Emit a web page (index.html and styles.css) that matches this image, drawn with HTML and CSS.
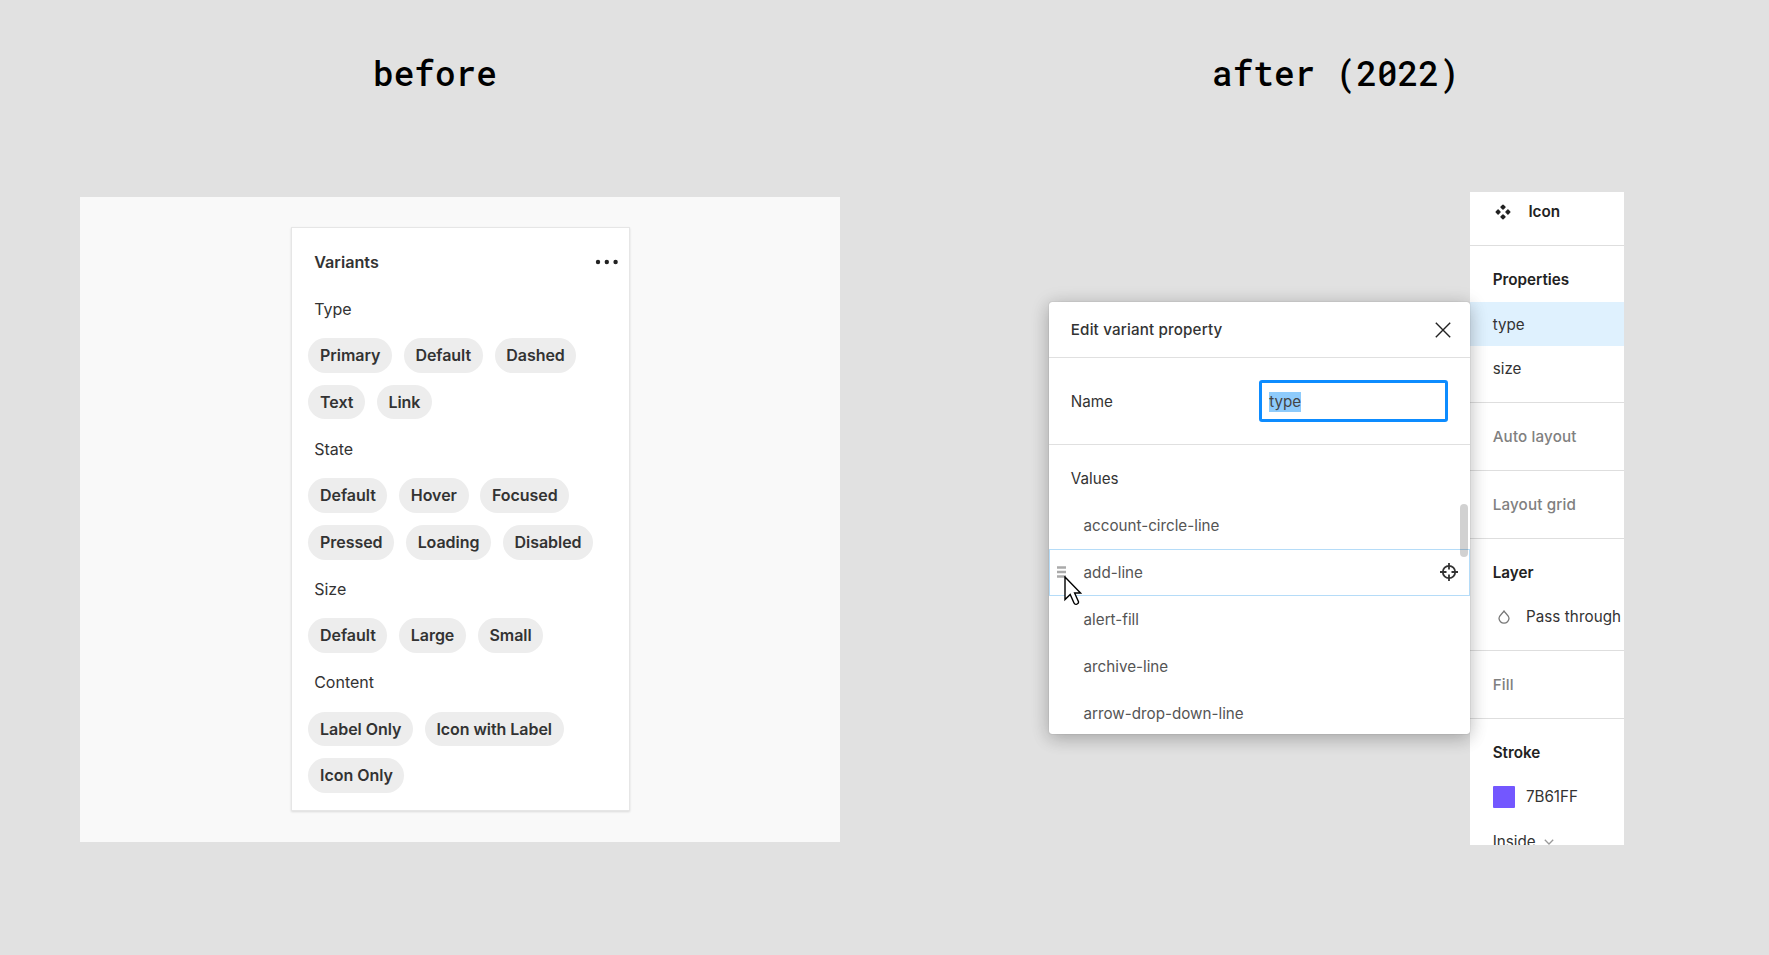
FILE: index.html
```html
<!DOCTYPE html>
<html lang="en">
<head>
<meta charset="utf-8">
<title>Variants: before and after</title>
<link rel="stylesheet" href="styles.css">
</head>
<body>
<main class="board">
  <section class="before">
    <h1 class="heading">before</h1>
    <div class="stage">
      <div class="card">
        <div class="card-head"><h2>Variants</h2>
          <svg class="dots" width="24" height="6" viewBox="0 0 24 6"><circle cx="3" cy="3" r="2.2"/><circle cx="11.8" cy="3" r="2.2"/><circle cx="20.6" cy="3" r="2.2"/></svg>
        </div>
        <p class="label">Type</p>
        <div class="chips"><span>Primary</span><span>Default</span><span>Dashed</span></div>
        <div class="chips"><span>Text</span><span>Link</span></div>
        <p class="label">State</p>
        <div class="chips"><span>Default</span><span>Hover</span><span>Focused</span></div>
        <div class="chips"><span>Pressed</span><span>Loading</span><span>Disabled</span></div>
        <p class="label">Size</p>
        <div class="chips"><span>Default</span><span>Large</span><span>Small</span></div>
        <p class="label">Content</p>
        <div class="chips"><span>Label Only</span><span>Icon with Label</span></div>
        <div class="chips"><span>Icon Only</span></div>
      </div>
    </div>
  </section>
  <section class="after">
    <h1 class="heading">after (2022)</h1>
    <div class="editor">
      <div class="modal">
        <header class="modal-head"><h2>Edit variant property</h2>
          <svg class="close" width="16" height="16" viewBox="0 0 16 16"><path d="M.8.8l14.4 14.4M15.2.8L.8 15.2"/></svg>
        </header>
        <div class="name-row"><span class="name">Name</span><div class="field"><mark>type</mark></div></div>
        <div class="values">
          <p class="values-title">Values</p>
          <ul class="list">
            <li><span>account-circle-line</span></li>
            <li class="active">
              <svg class="grip" width="9" height="12" viewBox="0 0 9 12"><path d="M0 1.500h9M0 6h9M0 10.500h9"/></svg>
              <span>add-line</span>
              <svg class="target" width="18" height="18" viewBox="0 0 18 18"><circle cx="9" cy="9" r="6.2"/><path d="M9 0v6.500M9 11.500v6.500M0 9h6.500M11.500 9h6.500"/></svg>
              <svg class="cursor" width="18" height="30" viewBox="0 0 18 30"><path d="M1 1v22.500l5.200-5 3.800 8.500q.8 1.800 2.800 1.200 2.200-.8 1.600-2.700L10.600 17H16.500z"/></svg>
            </li>
            <li><span>alert-fill</span></li>
            <li><span>archive-line</span></li>
            <li><span>arrow-drop-down-line</span></li>
          </ul>
          <div class="thumb"></div>
        </div>
      </div>
      <aside class="sidebar">
        <div class="component">
          <svg width="16" height="16" viewBox="0 0 16 16"><path d="M8 1.200L9.900 3.100 8 5 6.100 3.100zM8 11l1.900 1.900L8 14.800l-1.900-1.900zM3.100 6.100L5 8 3.100 9.900 1.200 8zM12.900 6.100L14.800 8l-1.900 1.900L11 8z"/></svg>
          <b>Icon</b>
        </div>
        <div class="group props"><h3>Properties</h3><p class="selected">type</p><p>size</p></div>
        <div class="group muted">Auto layout</div>
        <div class="group muted">Layout grid</div>
        <div class="group layer"><h3>Layer</h3>
          <p class="blend"><svg width="12" height="14" viewBox="0 0 12 14"><path d="M6 1C4.500 3.600 1 5.400 1 8.300a5 4.800 0 0 0 10 0C11 5.400 7.500 3.600 6 1z"/></svg><span>Pass through</span></p>
        </div>
        <div class="group muted">Fill</div>
        <div class="group stroke"><h3>Stroke</h3>
          <p class="color"><i></i><span>7B61FF</span></p>
          <p class="align">Inside <svg width="10" height="6" viewBox="0 0 10 6"><path d="M.8.8L5 5 9.200.8"/></svg></p>
        </div>
      </aside>
    </div>
  </section>
</main>
</body>
</html>
```
FILE: styles.css
```css
* { box-sizing: border-box; }
body { margin: 0; background: #e1e1e1; font-family: Inter, sans-serif; color: #333; }
h1, h2, h3, p, ul { margin: 0; padding: 0; list-style: none; }
svg { display: block; flex: none; }

.board { display: flex; height: 955px; overflow: hidden; }
.heading {
  font: 500 34.400px/44px "Roboto Mono", "DejaVu Sans Mono", monospace;
  color: #000;
  white-space: pre;
}

/* Variants card */
.before { width: 884px; padding: 51px 0 0 80px; }
.before .heading { margin-left: 293px; }
.stage { width: 760px; height: 644.500px; margin-top: 102.300px; padding: 30px 0 0 210.700px; background: #f9f9f9; }
.card {
  width: 339.500px;
  height: 584px;
  padding: 10.400px 12px 0 16.800px;
  background: #fff;
  border: 1px solid #e6e6e6;
  box-shadow: 0 1px 2px rgba(0, 0, 0, .12);
  font-size: 16px;
}
.card-head, .label, .chips { display: flex; align-items: center; height: 46.700px; }
.card-head { justify-content: space-between; padding-left: 5.700px; }
.card h2 { font-size: 16.200px; font-weight: 600; }
.dots { fill: #222; margin-right: -1.500px; }
.label { padding-left: 5.700px; }
.chips { gap: 11.800px; }
.chips span {
  height: 34.700px;
  padding: 0 11.600px;
  border-radius: 18px;
  background: #ededed;
  font-weight: 560;
  letter-spacing: -.05px;
  line-height: 35px;
}
.chips span + span { padding: 0 11.700px; }

/* Property editor */
.after { width: 885px; padding-top: 51px; }
.after .heading { margin-left: 328px; }
.editor { display: flex; margin: 97px 0 0 164.800px; font-size: 15.200px; }
.modal {
  position: relative;
  z-index: 1;
  width: 421.600px;
  height: 432.700px;
  margin-top: 109.700px;
  background: #fff;
  border-radius: 3px;
  box-shadow: 0 2px 20px rgba(0, 0, 0, .14), 0 5px 17px rgba(0, 0, 0, .16), 0 0 1px rgba(0, 0, 0, .4);
}
.modal-head { display: flex; align-items: center; justify-content: space-between; height: 56.700px; padding: 0 19.500px 0 22px; border-bottom: 1px solid #e0e0e0; }
.modal-head h2 { font-size: 15.200px; font-weight: 500; letter-spacing: .15px; }
.close { stroke: #222; stroke-width: 1.400; fill: none; }
.name-row { display: flex; align-items: center; justify-content: space-between; height: 87.100px; padding: 0 22px; border-bottom: 1px solid #e0e0e0; }
.field { width: 189px; height: 42px; padding: 8.500px 6.800px; border: 3px solid #0d8cff; border-radius: 3px; }
.field mark { display: block; width: max-content; height: 20px; line-height: 20px; background: #8ecbfb; color: #444; }
.values { position: relative; }
.values-title { height: 56.300px; padding: 0 22px; line-height: 68px; }
.list li { display: flex; align-items: center; position: relative; height: 47.100px; padding-left: 34.800px; color: #555; }
.list .active { outline: 1.300px solid #b5dcf8; outline-offset: -1.300px; }
.grip { position: absolute; left: 8px; top: 17px; stroke: #aaa; stroke-width: 2.500; }
.target { position: absolute; right: 12px; top: 14px; fill: none; stroke: #333; stroke-width: 1.800; }
.cursor { position: absolute; left: 15px; top: 27px; fill: #fff; stroke: #000; stroke-width: 1.400; }
.thumb { position: absolute; right: 2.500px; top: 58.500px; width: 8px; height: 53px; border-radius: 4px; background: rgba(0, 0, 0, .18); }

/* Inspector */
.sidebar { width: 154px; height: 653.300px; background: #fff; overflow: hidden; white-space: nowrap; }
.sidebar h3, .sidebar b { font-size: 15.250px; font-weight: 600; color: #222; }
.component { display: flex; gap: 17px; align-items: center; height: 53px; padding: 0 0 13.500px 25px; }
.component svg { fill: #222; stroke: #222; stroke-width: 1.500; stroke-linejoin: round; }
.group { border-top: 1px solid #dedede; padding-left: 22.300px; height: 67.900px; line-height: 68px; }
.muted { color: #808080; font-weight: 500; letter-spacing: .15px; }
.props { height: 157px; padding: 11px 0 0; line-height: 46px; }
.props h3, .props p { padding-left: 22.300px; height: 44.700px; line-height: 46px; }
.props .selected { background: #dff1fe; }
.layer { height: 112.300px; padding-top: 11px; line-height: 45px; }
.blend, .color { display: flex; align-items: center; height: 44.500px; }
.blend { margin-top: -.5px; }
.blend svg { margin: 0 16.200px 0 5px; fill: none; stroke: #777; stroke-width: 1.300; }
.blend span { letter-spacing: .08px; }
.stroke { height: 150px; padding-top: 11px; line-height: 45.500px; }
.color { margin-top: -1px; }
.color i { width: 22px; height: 22px; margin-right: 11.200px; border-radius: 1px; background: #7357ff; }
.align { display: flex; align-items: center; gap: 8px; }
.align svg { fill: none; stroke: #999; stroke-width: 1.300; }
```
